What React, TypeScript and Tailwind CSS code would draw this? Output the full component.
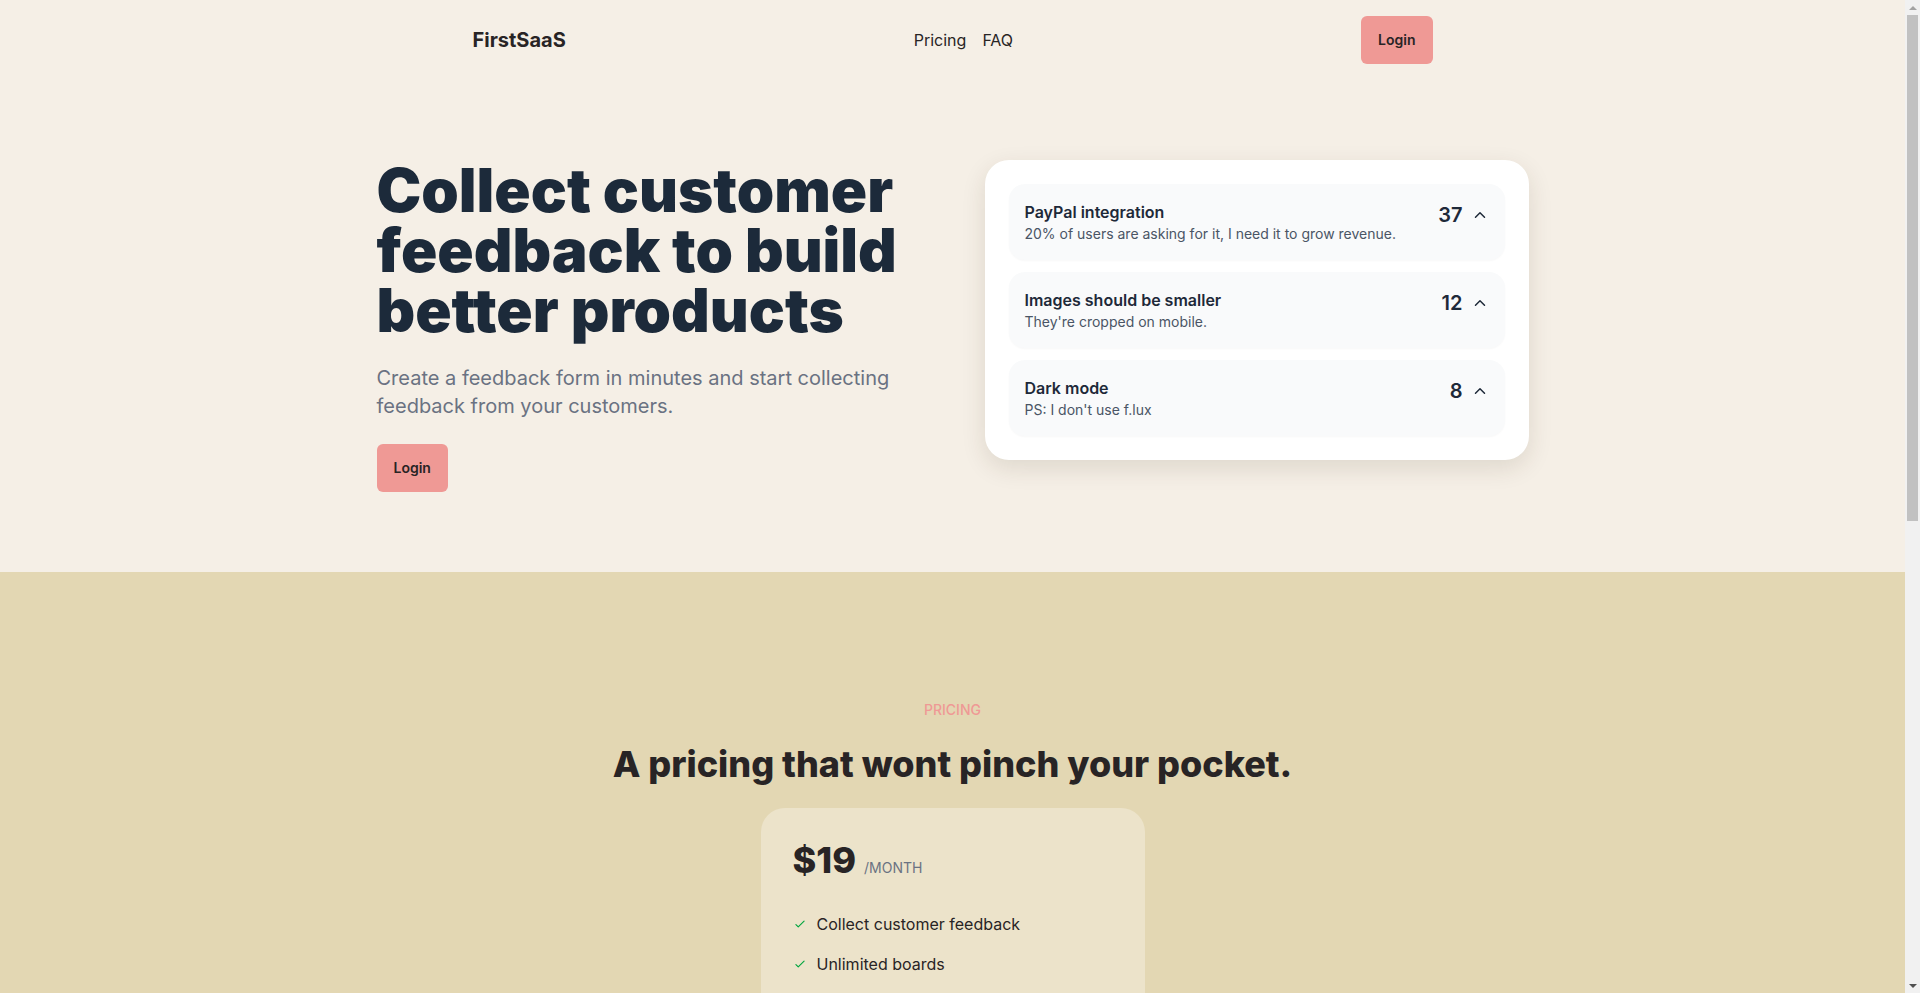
import React from "react";

function ChevronUp() {
  return (
    <svg width="18" height="18" viewBox="0 0 24 24" fill="none" stroke="currentColor" strokeWidth="2" strokeLinecap="round" strokeLinejoin="round">
      <path d="m18 15-6-6-6 6" />
    </svg>
  );
}

function Check() {
  return (
    <svg width="14" height="14" viewBox="0 0 24 24" fill="none" stroke="currentColor" strokeWidth="2" strokeLinecap="round" strokeLinejoin="round">
      <path d="M5 13l4 4L19 7" />
    </svg>
  );
}

const items = [
  { title: "PayPal integration", desc: "20% of users are asking for it, I need it to grow revenue.", votes: 37 },
  { title: "Images should be smaller", desc: "They're cropped on mobile.", votes: 12 },
  { title: "Dark mode", desc: "PS: I don't use f.lux", votes: 8 },
];

const features = [
  "Collect customer feedback",
  "Unlimited boards",
  "Admin dashboard",
  "Receive votes from users",
];

function Scrollbar() {
  return (
    <div className="w-[15px] shrink-0 h-screen bg-[#f1f1f1] flex flex-col items-center">
      <div className="h-[15px] w-full flex items-center justify-center">
        <div className="w-0 h-0 border-l-[4px] border-r-[4px] border-b-[4px] border-l-transparent border-r-transparent border-b-[#a3a3a3]" />
      </div>
      <div className="flex-1 w-full px-[2px]">
        <div className="h-[506px] w-full bg-[#c1c1c1]" />
      </div>
      <div className="h-[15px] w-full flex items-center justify-center">
        <div className="w-0 h-0 border-l-[4px] border-r-[4px] border-t-[4px] border-l-transparent border-r-transparent border-t-[#505050]" />
      </div>
    </div>
  );
}

export default function App() {
  return (
    <div className="flex h-screen overflow-hidden text-[#282425]" style={{ fontFamily: "Inter, 'Noto Sans', sans-serif" }}>
      <main className="flex-1 min-w-0 overflow-hidden">
        <div className="bg-[#f5efe6]">
          <nav className="max-w-5xl mx-auto px-8 py-4 flex items-center justify-between">
            <a className="text-xl font-bold text-[#282425]">FirstSaaS</a>
            <div className="flex items-center gap-4 text-base text-[#282425]">
              <a>Pricing</a>
              <a>FAQ</a>
            </div>
            <button className="h-12 px-[17px] rounded-[6px] bg-[#ef9995] text-sm font-semibold text-[#282425]">Login</button>
          </nav>
          <section className="max-w-6xl mx-auto py-20 grid grid-cols-2 gap-16 items-start">
            <div>
              <h1 className="text-6xl leading-none font-black text-[#1c2a3a]">
                Collect customer feedback to build better products
              </h1>
              <p className="mt-6 text-xl leading-7 text-gray-500 max-w-[520px]">
                Create a feedback form in minutes and start collecting feedback from your customers.
              </p>
              <button className="mt-6 h-12 px-[17px] rounded-[6px] bg-[#ef9995] text-sm font-semibold text-[#282425]">Login</button>
            </div>
            <div className="bg-white rounded-3xl shadow-[0_8px_24px_rgba(60,40,20,0.12)] p-6 space-y-3">
              {items.map((it) => (
                <div key={it.title} className="bg-[#f9fafb] rounded-2xl p-4 flex items-start justify-between shadow-[0_1px_2px_rgba(0,0,0,0.03)]">
                  <div>
                    <div className="text-base font-semibold text-gray-800 leading-6">{it.title}</div>
                    <div className="text-sm text-gray-600 leading-5">{it.desc}</div>
                  </div>
                  <div className="flex items-center gap-2 text-gray-800 pt-[1px]">
                    <span className="text-xl font-semibold">{it.votes}</span>
                    <ChevronUp />
                  </div>
                </div>
              ))}
            </div>
          </section>
        </div>
        <section className="bg-[#e3d7b3] py-32">
          <div className="max-w-5xl mx-auto px-8 flex flex-col items-center">
            <p className="text-sm font-medium text-[#ef9995] uppercase">Pricing</p>
            <h2 className="mt-6 text-4xl font-extrabold text-[#282425]">A pricing that wont pinch your pocket.</h2>
            <div className="mt-6 w-full max-w-sm bg-[#ece3ca] rounded-3xl p-8">
              <div className="flex items-baseline gap-2">
                <span className="text-4xl font-extrabold">$19</span>
                <span className="text-sm text-gray-500 uppercase">/month</span>
              </div>
              <ul className="mt-8 space-y-4">
                {features.map((f) => (
                  <li key={f} className="flex items-center gap-[10px] text-base">
                    <span className="text-green-600"><Check /></span>
                    {f}
                  </li>
                ))}
              </ul>
              <button className="mt-8 w-full h-12 rounded-[6px] bg-[#ef9995] text-sm font-semibold">Get started</button>
            </div>
          </div>
        </section>
      </main>
      <Scrollbar />
    </div>
  );
}
